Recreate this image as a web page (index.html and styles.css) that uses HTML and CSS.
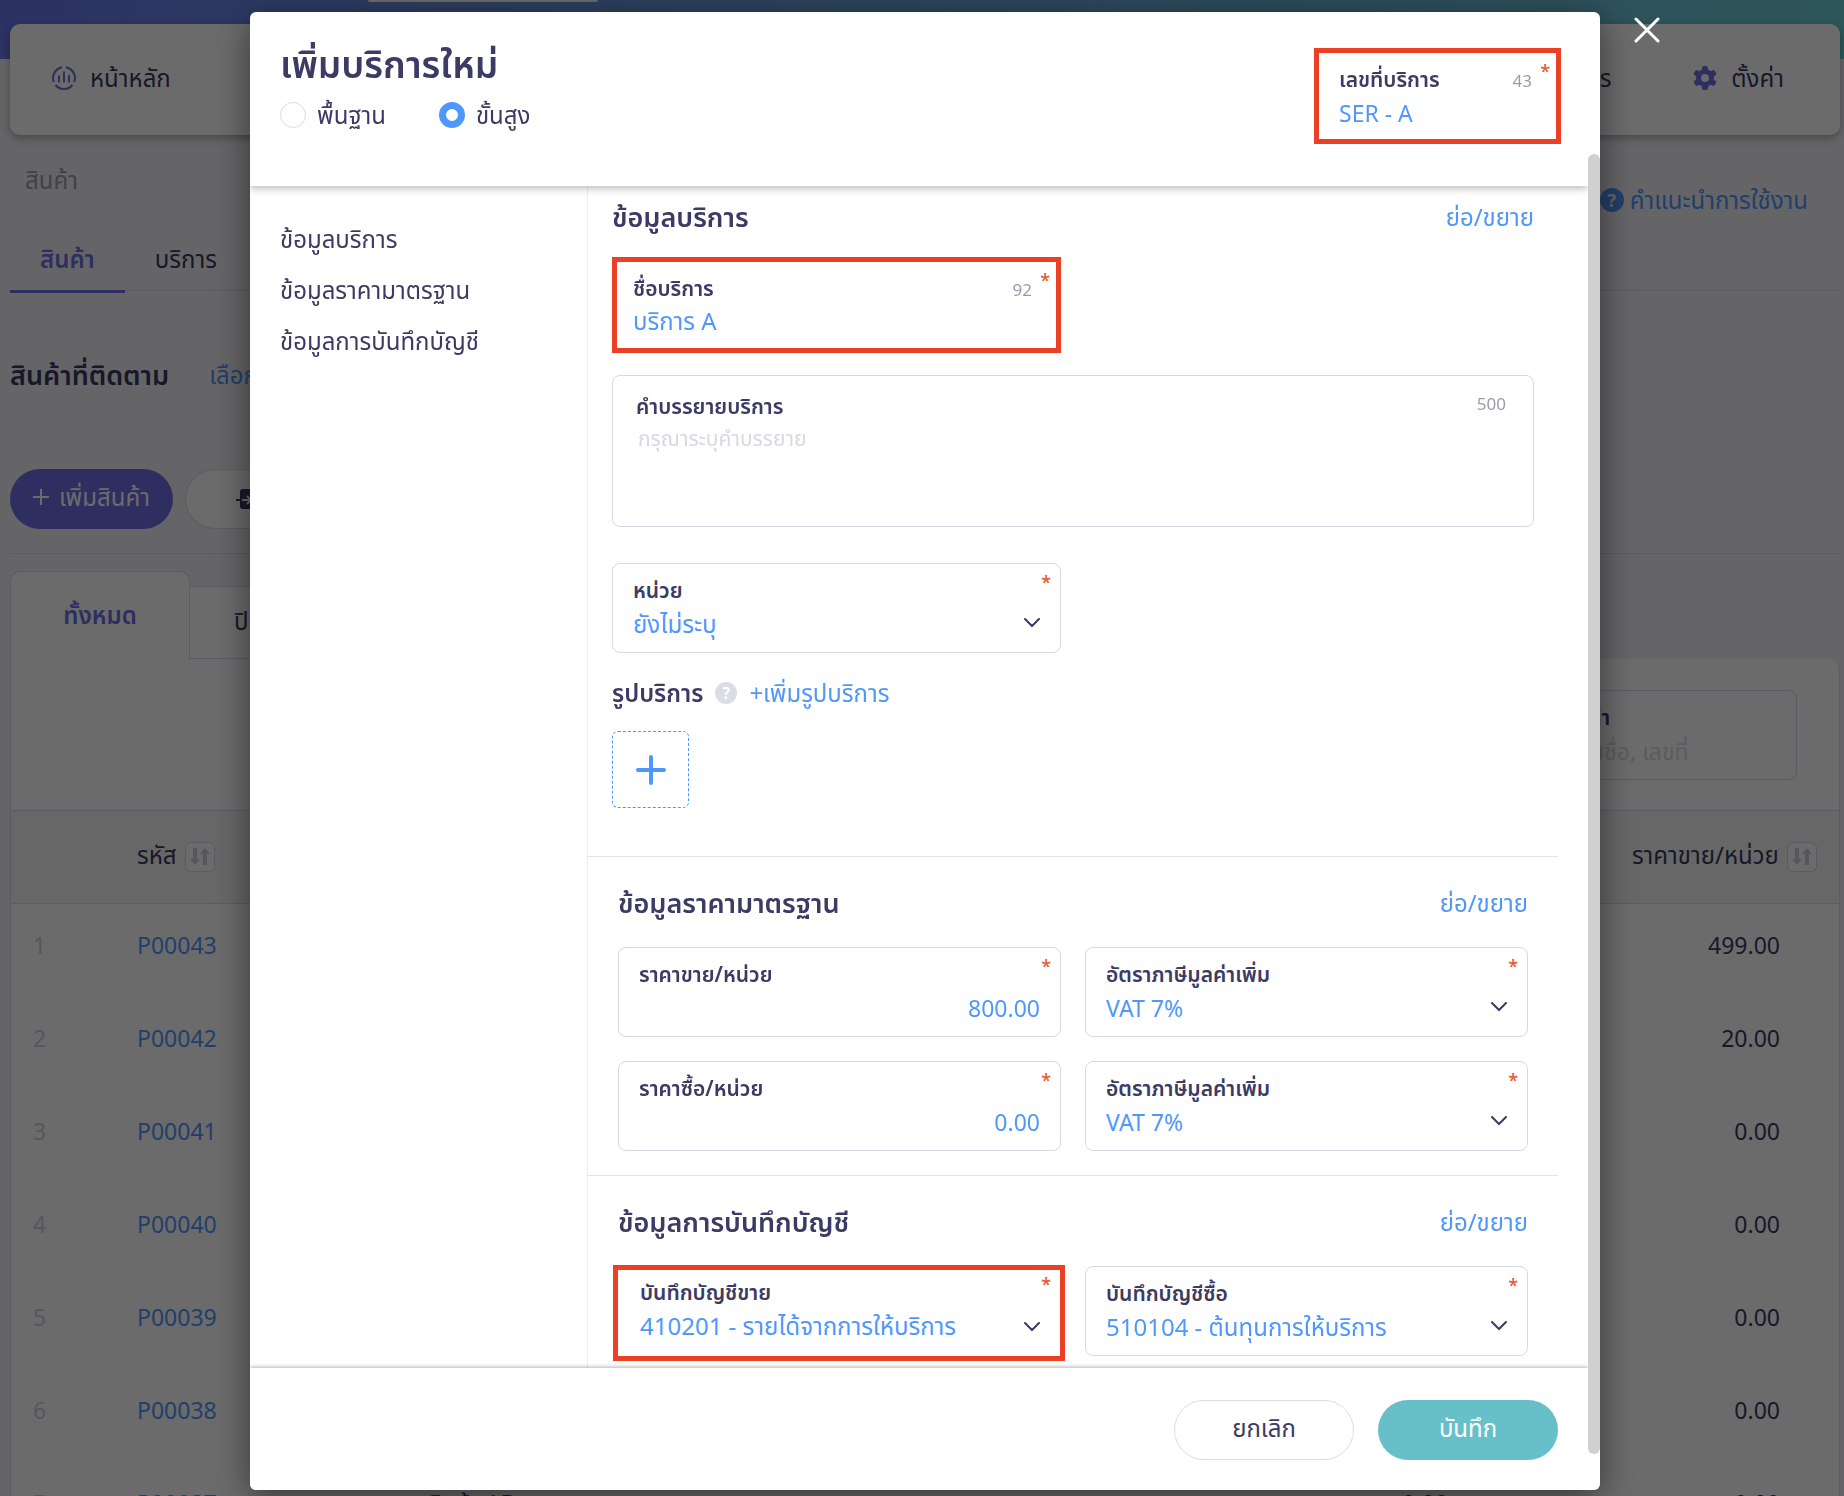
FILE: index.html
```html
<!DOCTYPE html>
<html lang="th">
<head>
    <meta charset="UTF-8">
    <meta name="viewport" content="width=device-width, initial-scale=1.0">
    <title>เพิ่มบริการใหม่</title>
    <link rel="stylesheet" href="styles.css">
</head>
<body>

    <div class="page">
        <header class="top-band">
            <div class="top-pill"></div>
            <nav class="main-nav">
                <a href="#">
                    <svg class="nav-icon" viewBox="0 0 24 24" fill="none" stroke="currentColor" stroke-width="2">
                        <path d="M10 1.200A11 11 0 0 0 1.800 16M14 1.200A11 11 0 0 1 22.200 16M3.500 19A11 11 0 0 0 20.500 19"/>
                        <path d="M7 9.500v7M12 5.500v11M17 9v7.500"/>
                    </svg>
                    หน้าหลัก
                </a>
                <a href="#" class="nav-docs">คลังเอกสาร</a>
                <a href="#" class="nav-settings">
                    <svg class="nav-icon" viewBox="0 0 24 24">
                        <g fill="currentColor">
                            <rect x="9" y="0" width="6" height="24" rx="2"/>
                            <rect x="9" y="0" width="6" height="24" rx="2" transform="rotate(60 12 12)"/>
                            <rect x="9" y="0" width="6" height="24" rx="2" transform="rotate(120 12 12)"/>
                            <circle cx="12" cy="12" r="9"/>
                        </g>
                        <circle cx="12" cy="12" r="4" fill="#fff"/>
                    </svg>
                    ตั้งค่า
                </a>
            </nav>
        </header>

        <main class="content">
            <div class="crumb-row">
                <span class="crumb">สินค้า</span>
                <a href="#" class="guide"><span class="guide-icon">?</span>คำแนะนำการใช้งาน</a>
            </div>
            <div class="tabs">
                <a href="#" class="active">สินค้า</a>
                <a href="#">บริการ</a>
            </div>
            <div class="follow-row">
                <h2>สินค้าที่ติดตาม</h2>
                <a href="#">เลือกสินค้า</a>
            </div>
            <div class="action-row">
                <button class="btn-add">
                    <svg width="16" height="16" viewBox="0 0 16 16" stroke="currentColor" stroke-width="2"><path d="M8 0v16M0 8h16"/></svg>
                    เพิ่มสินค้า
                </button>
                <button class="btn-import">
                    <svg width="24" height="22" viewBox="0 0 24 22" fill="none" stroke-width="2">
                        <rect x="4" y="1" width="19" height="20" rx="3" fill="#3b3b64"/>
                        <path d="M0 12h5" stroke="#3b3b64"/>
                        <path d="M6 12h8M11 8l4 4-4 4" stroke="#fff"/>
                    </svg>
                    นำเข้า
                </button>
            </div>
            <div class="list-tabs">
                <a href="#" class="active">ทั้งหมด</a>
                <a href="#">ปิดใช้งาน</a>
            </div>
            <section class="list-card">
                <div class="search-row">
                    <div class="search-box">
                        <label for="search">ค้นหาสินค้า</label>
                        <input id="search" type="text" placeholder="ค้นหาด้วยชื่อ, เลขที่">
                    </div>
                </div>
                <table class="product-table">
                    <thead>
                        <tr>
                            <th class="col-no"></th>
                            <th class="col-code">รหัส <button class="sort" aria-label="เรียงตามรหัส"><svg viewBox="0 0 20 18"><path d="M3 0h4v11h3L5 17 0 11h3zM13 17h4V6h3l-5-6-5 6h3z"/></svg></button></th>
                            <th class="col-name"></th>
                            <th class="col-buy"></th>
                            <th class="col-price">ราคาขาย/หน่วย <button class="sort" aria-label="เรียงตามราคา"><svg viewBox="0 0 20 18"><path d="M3 0h4v11h3L5 17 0 11h3zM13 17h4V6h3l-5-6-5 6h3z"/></svg></button></th>
                        </tr>
                    </thead>
                    <tbody>
                        <tr><td class="no">1</td><td><a href="#">P00043</a></td><td></td><td class="num"></td><td class="num">499.00</td></tr>
                        <tr><td class="no">2</td><td><a href="#">P00042</a></td><td></td><td class="num"></td><td class="num">20.00</td></tr>
                        <tr><td class="no">3</td><td><a href="#">P00041</a></td><td></td><td class="num"></td><td class="num">0.00</td></tr>
                        <tr><td class="no">4</td><td><a href="#">P00040</a></td><td></td><td class="num"></td><td class="num">0.00</td></tr>
                        <tr><td class="no">5</td><td><a href="#">P00039</a></td><td></td><td class="num"></td><td class="num">0.00</td></tr>
                        <tr><td class="no">6</td><td><a href="#">P00038</a></td><td></td><td class="num"></td><td class="num">0.00</td></tr>
                        <tr><td class="no">7</td><td><a href="#">P00037</a></td><td>สินค้า AB</td><td class="num">0.00</td><td class="num">0.00</td></tr>
                    </tbody>
                </table>
            </section>
        </main>
    </div>

    <div class="overlay">
        <form class="modal" role="dialog" aria-labelledby="modal-title">
            <div class="modal-main">
                <div class="modal-header">
                    <div>
                        <h1 id="modal-title">เพิ่มบริการใหม่</h1>
                        <div class="modes">
                            <label><input type="radio" name="mode">พื้นฐาน</label>
                            <label><input type="radio" name="mode" checked>ขั้นสูง</label>
                        </div>
                    </div>
                    <div class="field marked field-code">
                        <label for="code">เลขที่บริการ</label>
                        <input id="code" class="latin" type="text" value="SER - A">
                        <span class="count">43</span><span class="req">*</span>
                    </div>
                </div>

                <div class="modal-body">
                    <nav class="side-menu">
                        <a href="#info">ข้อมูลบริการ</a>
                        <a href="#price">ข้อมูลราคามาตรฐาน</a>
                        <a href="#account">ข้อมูลการบันทึกบัญชี</a>
                    </nav>

                    <div class="sections">
                        <section class="section section-info" id="info">
                            <div class="section-head">
                                <h2>ข้อมูลบริการ</h2>
                                <a href="#info">ย่อ/ขยาย</a>
                            </div>
                            <div class="half">
                                <div class="field marked">
                                    <label for="name">ชื่อบริการ</label>
                                    <input id="name" type="text" value="บริการ A">
                                    <span class="count">92</span><span class="req">*</span>
                                </div>
                            </div>
                            <div class="field field-area">
                                <label for="desc">คำบรรยายบริการ</label>
                                <textarea id="desc" placeholder="กรุณาระบุคำบรรยาย"></textarea>
                                <span class="count">500</span>
                            </div>
                            <div class="half">
                                <div class="field">
                                    <label for="unit">หน่วย</label>
                                    <select id="unit"><option>ยังไม่ระบุ</option></select>
                                    <span class="req">*</span>
                                    <svg class="chevron" viewBox="0 0 16 10"><path d="M1 1l7 7 7-7"/></svg>
                                </div>
                            </div>
                            <div class="photo-head">
                                <h3>รูปบริการ</h3>
                                <span class="hint">?</span>
                                <a href="#">+เพิ่มรูปบริการ</a>
                            </div>
                            <button type="button" class="photo-add" aria-label="เพิ่มรูปบริการ">
                                <svg width="30" height="30" viewBox="0 0 30 30"><path d="M15 2v26M2 15h26"/></svg>
                            </button>
                        </section>

                        <section class="section" id="price">
                            <div class="section-head">
                                <h2>ข้อมูลราคามาตรฐาน</h2>
                                <a href="#price">ย่อ/ขยาย</a>
                            </div>
                            <div class="grid">
                                <div class="field">
                                    <label for="sell">ราคาขาย/หน่วย</label>
                                    <input id="sell" class="latin amount" type="text" value="800.00">
                                    <span class="req">*</span>
                                </div>
                                <div class="field">
                                    <label for="sell-vat">อัตราภาษีมูลค่าเพิ่ม</label>
                                    <select id="sell-vat" class="latin"><option>VAT 7%</option></select>
                                    <span class="req">*</span>
                                    <svg class="chevron" viewBox="0 0 16 10"><path d="M1 1l7 7 7-7"/></svg>
                                </div>
                                <div class="field">
                                    <label for="buy">ราคาซื้อ/หน่วย</label>
                                    <input id="buy" class="latin amount" type="text" value="0.00">
                                    <span class="req">*</span>
                                </div>
                                <div class="field">
                                    <label for="buy-vat">อัตราภาษีมูลค่าเพิ่ม</label>
                                    <select id="buy-vat" class="latin"><option>VAT 7%</option></select>
                                    <span class="req">*</span>
                                    <svg class="chevron" viewBox="0 0 16 10"><path d="M1 1l7 7 7-7"/></svg>
                                </div>
                            </div>
                        </section>

                        <section class="section" id="account">
                            <div class="section-head">
                                <h2>ข้อมูลการบันทึกบัญชี</h2>
                                <a href="#account">ย่อ/ขยาย</a>
                            </div>
                            <div class="grid">
                                <div class="field marked outset">
                                    <label for="acc-sell">บันทึกบัญชีขาย</label>
                                    <select id="acc-sell"><option>410201 - รายได้จากการให้บริการ</option></select>
                                    <span class="req">*</span>
                                    <svg class="chevron" viewBox="0 0 16 10"><path d="M1 1l7 7 7-7"/></svg>
                                </div>
                                <div class="field">
                                    <label for="acc-buy">บันทึกบัญชีซื้อ</label>
                                    <select id="acc-buy"><option>510104 - ต้นทุนการให้บริการ</option></select>
                                    <span class="req">*</span>
                                    <svg class="chevron" viewBox="0 0 16 10"><path d="M1 1l7 7 7-7"/></svg>
                                </div>
                            </div>
                        </section>
                    </div>
                </div>

                <div class="modal-footer">
                    <button type="button" class="btn-cancel">ยกเลิก</button>
                    <button type="submit" class="btn-save">บันทึก</button>
                </div>
            </div>
            <div class="scroll-track"><div class="scroll-thumb"></div></div>
            <button type="button" class="close" aria-label="ปิด">
                <svg width="26" height="26" viewBox="0 0 26 26"><path d="M2 2l22 22M24 2L2 24"/></svg>
            </button>
        </form>
    </div>

</body>
</html>
```

FILE: styles.css
```css
* {
    box-sizing: border-box;
}

body {
    margin: 0;
    height: 100vh;
    overflow: hidden;
    background: #f0f0f5;
    color: #3b3b64;
    font-family: "Noto Sans", "Noto Sans Thai", sans-serif;
    font-size: 24px;
    line-height: 32px;
}

a {
    color: #4f97fc;
    text-decoration: none;
}

h1, h2, h3 {
    margin: 0;
    font-weight: 600;
}

button, input, select, textarea {
    font: inherit;
    color: inherit;
}

button {
    cursor: pointer;
}

/* page behind the modal */
.top-band {
    height: 59px;
    background: linear-gradient(90deg, #6977e9, #6b88e9 14%, #6dcdd4);
    padding: 0 4px 0 10px;
}

.top-pill {
    width: 230px;
    height: 2px;
    margin-left: 358px;
    background: #fff;
    border-radius: 0 0 16px 16px;
}

.main-nav {
    display: flex;
    align-items: center;
    height: 111px;
    margin-top: 22px;
    padding: 0 56px 4px 42px;
    background: #fff;
    border-radius: 10px;
    box-shadow: 0 3px 8px rgba(0, 0, 0, .3);
}

.main-nav a {
    display: flex;
    align-items: center;
    gap: 14px;
    color: #3b3b64;
}

.nav-icon {
    width: 24px;
    height: 24px;
    color: #6e6ee5;
}

.main-nav .nav-docs {
    margin-left: auto;
    margin-right: 82px;
}

.content {
    padding: 0 4px 0 10px;
    margin-top: 101px;
}

.crumb-row {
    display: flex;
    justify-content: space-between;
    height: 70px;
    padding: 4px 32px 0 15px;
}

.crumb {
    color: #9b9bb0;
}

.guide {
    display: flex;
    gap: 6px;
    align-items: center;
    height: 38px;
    margin-top: 17px;
}

.guide-icon {
    width: 24px;
    height: 24px;
    border-radius: 50%;
    background: #4f97fc;
    color: #f0f0f5;
    font-size: 18px;
    font-weight: 700;
    line-height: 24px;
    text-align: center;
}

.tabs {
    display: flex;
    height: 61px;
    border-bottom: 1px solid #d8d8e4;
}

.tabs a {
    height: 63px;
    padding: 13px 30px 0;
    color: #3b3b64;
}

.tabs .active {
    color: #6e6ee5;
    font-weight: 600;
    border-bottom: 3px solid #6e6ee5;
}

.follow-row {
    display: flex;
    gap: 40px;
    margin-top: 68px;
}

.follow-row h2 {
    font-size: 27px;
}

.action-row {
    display: flex;
    gap: 12px;
    margin-top: 78px;
    padding-bottom: 24px;
    border-bottom: 1px solid #d8d8e4;
}

.action-row button {
    display: flex;
    align-items: center;
    gap: 10px;
    height: 60px;
    border-radius: 30px;
}

.btn-add {
    padding: 0 23px 4px;
    border: 0;
    background: #6e6ee5;
    color: #fff;
}

.btn-import {
    padding: 0 50px;
    border: 1px solid #d8d8e4;
    background: #fff;
}

.list-tabs {
    display: flex;
    align-items: flex-end;
    margin-top: 17px;
}

.list-tabs a {
    height: 73px;
    padding: 18px 44px;
    background: #fff;
    border: 1px solid #d8d8e4;
    border-left: 0;
    color: #3b3b64;
}

.list-tabs .active {
    width: 180px;
    height: 88px;
    padding: 27px 0;
    border: 1px solid #d8d8e4;
    border-bottom: 0;
    border-radius: 10px 10px 0 0;
    color: #6e6ee5;
    font-weight: 600;
    text-align: center;
}

.list-card {
    background: #fff;
    border: 1px solid #d8d8e4;
    border-top: 0;
    border-radius: 0 10px 0 0;
}

.search-row {
    display: flex;
    justify-content: flex-end;
    padding: 31px 42px 30px 0;
}

.search-box {
    width: 304px;
    height: 90px;
    padding: 12px 20px;
    border: 1px solid #d8d8e4;
    border-radius: 8px;
}

.search-box label {
    display: block;
    font-size: 21px;
    line-height: 28px;
    font-weight: 600;
}

.search-box input {
    width: 100%;
    height: 40px;
    padding: 0;
    border: 0;
    background: none;
    font-size: 23px;
}

.search-box input::placeholder {
    color: #d8d8e4;
    opacity: 1;
}

.product-table {
    width: 100%;
    table-layout: fixed;
    border-collapse: collapse;
}

.product-table th {
    height: 93px;
    padding: 0 0 3px;
    background: #f6f6f6;
    border-top: 1px solid #d8d8e4;
    border-bottom: 1px solid #d8d8e4;
    font-weight: 400;
    text-align: left;
}

.product-table td {
    height: 93px;
    padding: 0 0 11px;
    font-size: 23px;
}

.col-no {
    width: 126px;
}

.col-code {
    width: 292px;
}

.col-buy {
    width: 220px;
}

.col-price {
    width: 332px;
}

.product-table .col-price {
    padding-right: 22px;
    text-align: right;
}

.product-table .no {
    padding-left: 22px;
    color: #d0d0da;
}

.product-table .num {
    padding-right: 59px;
    text-align: right;
}

.sort {
    width: 30px;
    height: 30px;
    margin-left: 2px;
    padding: 4px;
    border: 1px solid #d8d8e4;
    border-radius: 6px;
    background: #fff;
    vertical-align: middle;
}

.sort svg {
    display: block;
    fill: #d0d0da;
}

/* modal */
.overlay {
    position: fixed;
    inset: 0;
    display: flex;
    padding: 12px 244px 6px 250px;
    background: rgba(0, 0, 0, .58);
}

.modal {
    position: relative;
    display: flex;
    flex: 1;
    background: #fff;
    border-radius: 6px;
    box-shadow: 0 8px 36px rgba(0, 0, 0, .5);
}

.modal-main {
    display: flex;
    flex: 1;
    flex-direction: column;
    min-width: 0;
    overflow: hidden;
    border-radius: 6px 0 0 6px;
}

.modal-header {
    position: relative;
    display: flex;
    justify-content: space-between;
    height: 174px;
    padding: 36px 27px 0 30px;
    box-shadow: 0 2px 8px rgba(0, 0, 0, .3);
}

.modal-header h1 {
    font-size: 37px;
    line-height: 32px;
}

.modes {
    display: flex;
    gap: 53px;
    margin-top: 19px;
}

.modes label {
    display: flex;
    align-items: center;
    gap: 11px;
}

.modes input {
    appearance: none;
    width: 26px;
    height: 26px;
    margin: 0;
    border: 1px solid #dcdce6;
    border-radius: 50%;
}

.modes input:checked {
    border: 7px solid #4f97fc;
}

.modal-body {
    display: flex;
    flex: 1;
    min-height: 0;
    overflow: hidden;
}

.side-menu {
    display: flex;
    flex-direction: column;
    gap: 19px;
    width: 338px;
    padding: 37px 30px;
    border-right: 1px solid #ededf2;
}

.side-menu a {
    color: #3b3b64;
}

.sections {
    flex: 1;
    padding-right: 30px;
}

.section {
    padding: 30px 30px 24px;
    border-bottom: 1px solid #e3e3e8;
}

.section-info {
    padding: 15px 24px 48px;
}

.section:last-child {
    border-bottom: 0;
}

.section-head {
    display: flex;
    align-items: center;
    justify-content: space-between;
    margin-bottom: 28px;
}

.section-info .section-head {
    margin-bottom: 24px;
}

.section-head h2 {
    font-size: 27px;
}

.half {
    width: 449px;
}

.grid {
    display: grid;
    grid-template-columns: 1fr 1fr;
    gap: 24px;
}

.field {
    position: relative;
    height: 90px;
    padding: 12px 20px 0;
    border: 1px solid #d8d8e4;
    border-radius: 8px;
    background: #fff;
}

.field label {
    display: block;
    font-size: 21px;
    line-height: 28px;
    font-weight: 600;
}

.field input, .field select, .field textarea {
    display: block;
    appearance: none;
    width: 100%;
    height: 40px;
    padding: 0;
    border: 0;
    outline: 0;
    background: none;
    color: #4f97fc;
    resize: none;
}

.field .latin {
    font-size: 23px;
}

.field .amount {
    text-align: right;
}

.field textarea {
    height: 80px;
    padding: 2px;
    font-size: 21px;
}

.field textarea::placeholder {
    color: #d8d8e2;
    opacity: 1;
}

.marked {
    height: 96px;
    padding: 12px 16px 0;
    border: 5px solid #eb4026;
    border-radius: 0;
}

.outset {
    margin: -1px -4px -5px -5px;
    padding: 8px 22px 0;
}

.field-code {
    width: 247px;
    padding-left: 20px;
}

.field-area {
    height: 152px;
    margin: 22px 0 36px;
    padding: 16px 23px 0;
}

.count {
    position: absolute;
    top: 12px;
    right: 27px;
    color: #9b9bb0;
    font-size: 17px;
    line-height: 32px;
}

.req {
    position: absolute;
    top: 4px;
    right: 9px;
    color: #e8603c;
    font-size: 18px;
    font-weight: 600;
    line-height: 28px;
}

.marked .count {
    right: 24px;
}

.marked .req {
    right: 6px;
}

.outset .req {
    top: 0;
    right: 9px;
}

.chevron {
    position: absolute;
    right: 20px;
    bottom: 24px;
    width: 16px;
    height: 10px;
    fill: none;
    stroke: #3b3b64;
    stroke-width: 2;
    stroke-linecap: round;
}

.photo-head {
    display: flex;
    align-items: center;
    gap: 12px;
    margin: 24px 0 22px;
}

.photo-head h3 {
    font-size: 24px;
}

.hint {
    width: 22px;
    height: 22px;
    border-radius: 50%;
    background: #dcdce6;
    color: #fff;
    font-size: 16px;
    font-weight: 700;
    line-height: 22px;
    text-align: center;
}

.photo-add {
    display: flex;
    align-items: center;
    justify-content: center;
    width: 77px;
    height: 77px;
    border: 1px dashed #4f97fc;
    border-radius: 6px;
    background: #fff;
}

.photo-add path {
    stroke: #4f97fc;
    stroke-width: 4;
    stroke-linecap: round;
}

.modal-footer {
    position: relative;
    display: flex;
    justify-content: flex-end;
    gap: 24px;
    height: 122px;
    padding: 32px 30px 0 0;
    background: #fff;
    box-shadow: 0 -1px 4px rgba(0, 0, 0, .3);
}

.modal-footer button {
    width: 180px;
    height: 60px;
    padding: 0 0 4px;
    border: 1px solid #dcdce8;
    border-radius: 30px;
    background: #fff;
}

.modal-footer .btn-save {
    border: 0;
    background: #67bfc9;
    color: #fff;
}

.scroll-track {
    width: 12px;
    padding: 142px 0 36px;
}

.scroll-thumb {
    height: 100%;
    border-radius: 6px;
    background: #d0d0d0;
}

.close {
    position: absolute;
    top: 5px;
    right: -60px;
    padding: 0;
    border: 0;
    background: none;
    line-height: 0;
}

.close path {
    stroke: #fff;
    stroke-width: 3;
    stroke-linecap: round;
}
```
